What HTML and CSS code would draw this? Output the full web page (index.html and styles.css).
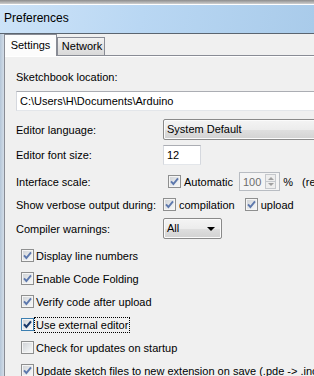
FILE: index.html
```html
<!DOCTYPE html>
<html>
<head>
  <link rel="stylesheet" href="styles.css">
</head>
<body>

  <div class="win">
    <!-- Title bar -->
    <div class="rim"></div>
    <div class="caption">Preferences</div>

    <div class="client">
      <div class="frame"></div>

      <div class="main">
        <!-- Tabs -->
        <div class="tabs">
          <div class="tab on">Settings</div>
          <div class="tab">Network</div>
        </div>

        <!-- Settings pane -->
        <div class="pane">
          <div class="lbl first">Sketchbook location:</div>
          <div class="field path">C:\Users\H\Documents\Arduino</div>

          <div class="row r-lang">
            <span class="name">Editor language:</span>
            <div class="combo wide">System Default</div>
          </div>

          <div class="row r-size">
            <span class="name">Editor font size:</span>
            <div class="field small">12</div>
          </div>

          <div class="row r-scale">
            <span class="name">Interface scale:</span>
            <span class="cb on auto"><svg viewBox="0 0 11 11"><path d="M2 5.3 L4.4 8 L9 2.4" /></svg></span>
            <span class="txt t-auto">Automatic</span>
            <div class="spin">
              <span class="val">100</span>
              <span class="btns">
                <span class="up"></span>
                <span class="down"></span>
              </span>
            </div>
            <span class="txt pct">%</span>
            <span class="txt note">(requires restart of Arduino)</span>
          </div>

          <div class="row r-verb">
            <span class="name">Show verbose output during:</span>
            <span class="cb on"><svg viewBox="0 0 11 11"><path d="M2 5.3 L4.4 8 L9 2.4" /></svg></span>
            <span class="txt t-comp">compilation</span>
            <span class="cb on c-up"><svg viewBox="0 0 11 11"><path d="M2 5.3 L4.4 8 L9 2.4" /></svg></span>
            <span class="txt t-comp">upload</span>
          </div>

          <div class="row r-warn">
            <span class="name">Compiler warnings:</span>
            <div class="combo warn">All <span class="arrow"></span></div>
          </div>

          <div class="checks">
            <div class="chk"><span class="cb on"><svg viewBox="0 0 11 11"><path d="M2 5.3 L4.4 8 L9 2.4" /></svg></span><span class="txt">Display line numbers</span></div>
            <div class="chk"><span class="cb on"><svg viewBox="0 0 11 11"><path d="M2 5.3 L4.4 8 L9 2.4" /></svg></span><span class="txt">Enable Code Folding</span></div>
            <div class="chk"><span class="cb on"><svg viewBox="0 0 11 11"><path d="M2 5.3 L4.4 8 L9 2.4" /></svg></span><span class="txt">Verify code after upload</span></div>
            <div class="chk"><span class="cb on hot"><svg viewBox="0 0 11 11"><path d="M2 5.3 L4.4 8 L9 2.4" /></svg></span><span class="txt focus">Use external editor</span></div>
            <div class="chk"><span class="cb"></span><span class="txt">Check for updates on startup</span></div>
            <div class="chk"><span class="cb on"><svg viewBox="0 0 11 11"><path d="M2 5.3 L4.4 8 L9 2.4" /></svg></span><span class="txt">Update sketch files to new extension on save (.pde -&gt; .ino)</span></div>
          </div>
        </div>
      </div>
    </div>
  </div>

</body>
</html>
```

FILE: styles.css
```css
body {
  margin: 0;
  background: #f0f0f0;
  font-family: "Liberation Sans", Arial, sans-serif;
  font-size: 11px;
  color: #000;
}

.win {
  width: 314px;
  height: 376px;
  overflow: hidden;
  background: #f0f0f0;
}

/* title bar */
.rim {
  height: 4px;
  background: linear-gradient(#8c8c8c, #cfcfcf);
  border-bottom: 1px solid #fff;
}

.caption {
  height: 28px;
  line-height: 27px;
  padding-left: 4px;
  font-size: 12px;
  background: linear-gradient(100deg, #cde3f8, #b9d7f3 45%, #a9cbea);
  border-bottom: 1px solid #5b6570;
}

.client {
  display: flex;
  height: 342px;
}

.frame {
  width: 4px;
  flex: none;
  background: linear-gradient(to right, #b5c6d8, #d3dde8);
}

.main {
  flex: 1;
  min-width: 0;
  overflow: hidden;
}

/* tabs */
.tabs {
  display: flex;
  align-items: flex-end;
  height: 21px;
}

.tab {
  box-sizing: border-box;
  height: 18px;
  width: 48px;
  line-height: 17px;
  text-align: center;
  border: 1px solid #898c95;
  border-bottom: none;
  background: linear-gradient(#f3f3f3, #e4e4e4 50%, #d9d9d9);
  padding-left: 2px;
}

.tab.on {
  position: relative;
  z-index: 1;
  height: 22px;
  width: 53px;
  margin-bottom: -1px;
  line-height: 21px;
  padding-left: 0;
  background: #fcfcfc;
}

.pane {
  width: 420px;
  height: 320px;
  border-top: 1px solid #898c95;
  border-left: 1px solid #898c95;
  box-shadow: inset 0 1px 0 #fff;
  padding-left: 11px;
}

.lbl.first {
  margin-top: 14px;
  line-height: 14px;
}

/* text fields */
.field {
  box-sizing: border-box;
  height: 20px;
  line-height: 18px;
  padding-left: 3px;
  background: #fff;
  border: 1px solid #abadb3;
  border-color: #abadb3 #d5d8de #e3e6ea #d5d8de;
}

.field.path {
  margin-top: 7px;
  width: 400px;
}

.field.small {
  width: 38px;
}

.row {
  display: flex;
  align-items: center;
}

.name {
  width: 147px;
  flex: none;
}

.r-lang { margin-top: 8px; height: 21px; }
.r-size { margin-top: 5px; height: 20px; }
.r-scale { margin-top: 7px; height: 19px; }
.r-verb { margin-top: 6px; height: 15px; }
.r-warn { margin-top: 6px; height: 21px; }

.txt {
  white-space: nowrap;
  margin-left: 3px;
}

/* combo boxes */
.combo {
  box-sizing: border-box;
  height: 21px;
  line-height: 19px;
  padding-left: 3px;
  border: 1px solid #8a8a8a;
  border-radius: 2px;
  background: linear-gradient(#f4f4f4, #ececec 50%, #dfdfdf 51%, #d2d2d2);
  box-shadow: inset 0 0 0 1px #fbfbfb;
}

.combo.wide {
  width: 200px;
}

.combo.warn {
  position: relative;
  width: 59px;
}

.combo .arrow {
  position: absolute;
  right: 6px;
  top: 8px;
  border-left: 4px solid transparent;
  border-right: 4px solid transparent;
  border-top: 4px solid #000;
}

/* checkboxes */
.cb {
  box-sizing: border-box;
  width: 13px;
  height: 13px;
  flex: none;
  border: 1px solid #8e8f8f;
  background: linear-gradient(135deg, #cdd0d4, #eef0f1 70%, #f8f8f8);
  box-shadow: inset 0 0 0 1px #f5f5f5;
}

.cb svg {
  display: block;
  width: 11px;
  height: 11px;
}

.cb path {
  fill: none;
  stroke: #5d78ad;
  stroke-width: 1.9;
}

.cb.hot {
  border-color: #3c7fb1;
}

.cb.hot path {
  stroke: #1a3a6c;
  stroke-width: 2.1;
}

.cb.auto { margin-left: 5px; }
.c-up { margin-left: 10px; }

/* spinner */
.spin {
  box-sizing: border-box;
  display: flex;
  align-items: center;
  margin-left: 6px;
  width: 46px;
  height: 19px;
  border: 1px solid #b8bcc2;
  background: #f4f4f4;
  color: #6d6d6d;
}

.spin .val {
  flex: 1;
  text-align: right;
  padding-right: 4px;
}

.spin .btns {
  display: flex;
  flex-direction: column;
  width: 11px;
  height: 15px;
  margin-right: 3px;
}

.spin .up,
.spin .down {
  position: relative;
  flex: 1;
  border: 1px solid #c5c8cc;
  background: #eeeeee;
}

.spin .down {
  border-top: none;
}

.spin .up::after,
.spin .down::after {
  content: "";
  position: absolute;
  left: 2px;
  top: 2px;
  border-left: 3px solid transparent;
  border-right: 3px solid transparent;
}

.spin .up::after {
  border-bottom: 3px solid #a0a0a0;
}

.spin .down::after {
  top: 1px;
  border-top: 3px solid #a0a0a0;
}

.pct { margin-left: 3px; }
.note { margin-left: 9px; }

/* checkbox list */
.checks {
  margin-top: 5px;
}

.chk {
  display: flex;
  align-items: center;
  height: 23px;
  padding-left: 5px;
}

.chk .txt {
  margin-left: 2px;
}

.txt.focus {
  outline: 1px dotted #000;
  padding: 0 1px;
  margin-left: 1px;
  line-height: 14px;
}
```
